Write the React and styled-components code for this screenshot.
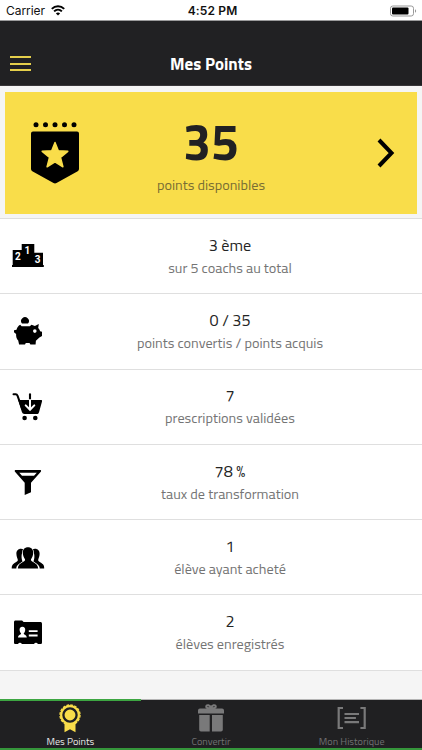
import React from 'react';
import styled, { createGlobalStyle } from 'styled-components';

const Global = createGlobalStyle`
  * { box-sizing: border-box; }
  body { margin: 0; background: #f5f5f5; font-family: "Titillium Web", "Noto Sans", sans-serif; }
`;
const Screen = styled.main`
  width: 422px; height: 750px; display: flex; flex-direction: column;
  overflow: hidden; background: #f5f5f5;
`;
const StatusBar = styled.div`
  height: 21px; flex: none; background: #fff; border-bottom: 1px solid #9b9b9c;
  display: grid; grid-template-columns: 1fr auto 1fr; align-items: center;
  padding: 1px 5px 0 6px; font-family: Inter, sans-serif; font-size: 12px; color: #111;
`;
const Carrier = styled.div`display: flex; align-items: center; gap: 6px; letter-spacing: -.05px;`;
const Clock = styled.div`font-weight: 600; letter-spacing: .15px; padding-left: 2px;`;
const Battery = styled.svg`justify-self: end; width: 28px; height: 12px;`;
const Header = styled.header`
  height: 65px; flex: none; background: #212123; border-bottom: 1px solid #39373a;
  display: grid; grid-template-columns: 40px 1fr 40px; align-items: end; padding-bottom: 8px;
`;
const MenuButton = styled.button`
  border: 0; background: none; padding: 0 0 6px 10px; height: 21px;
  display: flex; flex-direction: column; justify-content: space-between;
`;
const MenuBar = styled.span`width: 21px; height: 2px; background: #e5cf4b;`;
const Title = styled.h1`
  margin: 0; color: #fff; font-size: 17px; line-height: 26px; text-align: center;
  font-weight: 700;
`;
const Hero = styled.section`
  margin: 6px 5px 4px; height: 122px; flex: none; background: #f9dd4a;
  display: grid; grid-template-columns: 100px 1fr 60px; align-items: center;
`;
const HeroText = styled.div`
  display: flex; flex-direction: column; align-items: center; width: 212px; height: 100%;
`;
const Score = styled.strong`
  font-size: 50px; line-height: 52px; font-weight: 700; color: #212123; margin-top: 23px;
`;
const Label = styled.span`
  font-size: 14.25px; line-height: 22px; color: ${p => (p.$hero ? '#786d34' : '#747474')};
  margin-top: ${p => (p.$hero ? 7 : 1)}px; white-space: nowrap;
`;
const List = styled.ul`
  margin: 0; padding: 0; list-style: none; flex: none; background: #fff; border-top: 1px solid #dedede;
`;
const Row = styled.li`
  height: 75.3px; border-bottom: 1px solid #dfdfdf;
  display: grid; grid-template-columns: 46px 1fr; align-items: center; padding: 0 18px 0 10px;
`;
const RowIcon = styled.svg`width: 36px; height: 36px; fill: #000;`;
const RowText = styled.div`
  display: flex; flex-direction: column; align-items: center;
`;
const Value = styled.span`font-size: 16.2px; line-height: 22px; color: #242424;`;
const Tabs = styled.nav`
  margin-top: auto; height: 51px; flex: none; display: grid; grid-template-columns: 1fr 1fr 1fr;
  background: #202022; border-bottom: 2px solid #35963b;
`;
const Tab = styled.a`
  display: flex; flex-direction: column; align-items: center;
  border-top: ${p => (p.$active ? '2px solid #3da642' : '1px solid #b5b5b5')};
  padding-top: ${p => (p.$active ? 1 : 2)}px;
  color: ${p => (p.$active ? '#e8e8e8' : '#717173')};
`;
const TabIcon = styled.svg`width: 32px; height: 32px; flex: none; overflow: visible;`;
const TabLabel = styled.span`
  font-size: 10.15px; line-height: 14px; margin-top: 1px; white-space: nowrap;
`;

const Wifi = () => (
  <svg width="14" height="11" viewBox="0 0 14 11" fill="none" stroke="#000" strokeWidth="2">
    <path d="M.8 3.9C4.3.5 9.7.5 13.2 3.9M3.1 6.4c2.2-2.1 5.6-2.1 7.8 0" />
    <path d="M7 10.5 4.9 8.4c1.2-1.1 3-1.1 4.2 0z" fill="#000" stroke="none" />
  </svg>
);

const Podium = () => (
  <RowIcon viewBox="0 0 36 36">
    <path d="M2.7 12h9V6h12.6v8.700H33V27h.8v2H2v-2h.7z" />
    <g fill="#fff" fontFamily="Roboto, sans-serif" fontWeight="700" fontSize="10" textAnchor="middle">
      <text x="7.9" y="21.7">2</text><text x="17.4" y="16.2">1</text><text x="27.5" y="25">3</text>
    </g>
  </RowIcon>
);
const Piggy = () => (
  <RowIcon viewBox="0 0 36 36">
    <path d="M12 10.600a3.900 3.900 0 1 1 6 0z" />
    <path d="M10.200 11.800 11.600 13.200h8.200l1.700-1.500 3.400 1.200 3.900-1.900-.6 4c1 1.100 1.500 2 1.900 3.200l1.900.6v4.300l-2.600 1.500-3.500 3.200-.3 3.800h-5.200l-.9-1.700h-3.700l-.8 1.700H9.100l-.9-4c-1.600-1.700-2.200-3.900-2.100-6.700L4 19.200v-2l2.500-.5c.7-2.400 1.900-4 3.700-4.900z" />
    <circle cx="24.800" cy="18.100" r="1.800" fill="#fff" />
  </RowIcon>
);
const Cart = () => (
  <RowIcon viewBox="0 0 36 36">
    <path d="M3.500 5.300h2.200c1 0 1.500.6 1.900 1.600l4.600 13" fill="none" stroke="#000" strokeWidth="2" strokeLinecap="round" />
    <path d="M8.200 11h22.600c1 0 1.500.5 1.200 1.400l-3 10.800c-.4 1.300-1 1.800-2.300 1.800H14.500c-1.400 0-2.100-.6-2.600-1.900z" />
    <path d="M20 5.400V11" stroke="#000" strokeWidth="2.100" strokeLinecap="round" />
    <path d="M20 11v9.600m-4.300-4.200 4.300 4.400 4.300-4.400" fill="none" stroke="#fff" strokeWidth="2" strokeLinecap="round" />
    <circle cx="14.600" cy="29" r="2.300" /><circle cx="25.300" cy="29" r="2.300" />
  </RowIcon>
);
const Funnel = () => (
  <RowIcon viewBox="0 0 36 36">
    <path fillRule="evenodd" d="M5.300 6h25.200c.7 0 .8 1.200.3 1.800L21 18.700v9.600L14.700 31V18.700L5 7.800C4.500 7.200 4.700 6 5.300 6zM9.300 8.700 12 11.800h12l2.800-3.100z" />
  </RowIcon>
);
const People = () => (
  <RowIcon viewBox="0 0 36 36">
    <path d="M14 10.500C9.500 8.500 6.200 11 6.400 15c.1 2.500 1 4 1.400 5.700.4 1.800-3 2.700-4.800 4.600-1 1.100-1.300 2.500-1.300 4.100h4.600c0-4.200 4.500-5.300 6.500-6.500-1.600-2.900-2-8.500 1.200-12.400zM22 10.500c4.500-2 7.800.5 7.600 4.500-.1 2.500-1 4-1.400 5.700-.4 1.800 3 2.700 4.800 4.600 1 1.100 1.200 2.500 1.200 4.100h-4.500c0-4.200-4.500-5.300-6.500-6.500 1.600-2.900 2-8.500-1.200-12.400z" />
    <path d="M18 8.200c-3.200 0-5.300 2.100-5.200 5.500 0 2.600 1.200 5.200 2.200 6.600 1.100 3.100-6.500 2.500-7.200 9.100h20.400c-.7-6.600-8.300-6-7.200-9.100 1-1.400 2.200-4 2.200-6.600.1-3.400-2-5.500-5.200-5.500z" stroke="#fff" strokeWidth="1.300" paintOrder="stroke" />
  </RowIcon>
);
const IdFolder = () => (
  <RowIcon viewBox="0 0 36 36">
    <path d="M5.600 5.400h6.500l1.500 1.700h16.600c1.200 0 1.800.6 1.800 1.800v18.600c0 1-.6 1.600-1.600 1.600h-2.600a1.900 1.900 0 0 0-3.700 0H11.800a1.900 1.900 0 0 0-3.700 0H5.600c-1 0-1.600-.6-1.600-1.600V7c0-1 .6-1.600 1.600-1.600z" />
    <g fill="#fff">
      <path d="M12.400 11.700c-2 0-3 1.400-2.800 3.200.1 1.500.7 2.500 1.400 3.400.5 1.600-2.800 1.200-3 4.200h8.800c-.2-3-3.500-2.600-3-4.200.7-.9 1.300-1.900 1.400-3.400.2-1.800-.8-3.200-2.800-3.200z" />
      <path d="M18.800 15.200h8.800V17h-8.800zM18.800 19.600h8.800v1.800h-8.800z" />
    </g>
  </RowIcon>
);

const rows = [
  { icon: Podium, value: '3 ème', label: 'sur 5 coachs au total' },
  { icon: Piggy, value: '0 / 35', label: 'points convertis / points acquis' },
  { icon: Cart, value: '7', label: 'prescriptions validées' },
  { icon: Funnel, value: '78 %', label: 'taux de transformation' },
  { icon: People, value: '1', label: 'élève ayant acheté' },
  { icon: IdFolder, value: '2', label: 'élèves enregistrés' },
];

const ShieldBadge = styled.svg`width: 48px; height: 62px; margin-left: 26px;`;
const Chevron = styled.svg`width: 18px; height: 30px; margin-left: 20px;`;

export default function App() {
  return (
    <Screen>
      <Global />
      <StatusBar>
        <Carrier>Carrier <Wifi /></Carrier>
        <Clock>4:52 PM</Clock>
        <Battery viewBox="0 0 28 12">
          <rect x="1.500" y="1" width="23" height="10" rx="2.300" fill="#fff" stroke="#999" />
          <rect x="3" y="2.500" width="16.500" height="7" rx="1" />
          <path d="M26 4.300c1.500.4 1.500 3 0 3.400z" fill="#999" />
        </Battery>
      </StatusBar>
      <Header>
        <MenuButton aria-label="Menu"><MenuBar /><MenuBar /><MenuBar /></MenuButton>
        <Title>Mes Points</Title>
      </Header>
      <Hero>
        <ShieldBadge viewBox="0 0 48 62">
          {[5, 14.5, 24, 33.5, 43].map(x => <circle key={x} cx={x} cy="2.700" r="2.500" />)}
          <path d="M2 9.500h44q2 0 2 2V47q0 1.500-1.300 2.200L25.500 61q-1.500.8-3 0L1.300 49.200Q0 48.500 0 47V11.500q0-2 2-2z" />
          <path d="m24 20.500 3.300 8.200 9.500.6-7.300 6.100 2.400 9.400-7.900-5-7.900 5 2.400-9.400-7.300-6.100 9.500-.6z" fill="#f9dd4a" stroke="#f9dd4a" strokeWidth="1.500" strokeLinejoin="round" />
        </ShieldBadge>
        <HeroText>
          <Score>35</Score>
          <Label $hero>points disponibles</Label>
        </HeroText>
        <Chevron viewBox="0 0 18 30" fill="none" stroke="#000" strokeWidth="4">
          <path d="M2 2 14.500 15 2 28" />
        </Chevron>
      </Hero>
      <List>
        {rows.map(({ icon: Icon, value, label }) => (
          <Row key={label}>
            <Icon />
            <RowText>
              <Value>{value}</Value>
              <Label>{label}</Label>
            </RowText>
          </Row>
        ))}
      </List>
      <Tabs>
        <Tab $active>
          <TabIcon viewBox="0 0 32 32" fill="#f9dd4a">
            <path d="M10.500 20h11v10.200l-5.500-3-5.500 3z" />
            <circle cx="16" cy="13" r="10" stroke="#f9dd4a" strokeWidth="1.400" strokeDasharray="2.700 1.230" />
            <circle cx="16" cy="13" r="6.600" fill="none" stroke="#202022" strokeWidth="2.300" />
          </TabIcon>
          <TabLabel>Mes Points</TabLabel>
        </Tab>
        <Tab>
          <TabIcon viewBox="0 0 32 32" fill="#79797a">
            <path d="M5 6.500h22q2 0 2 2v3H3v-3q0-2 2-2zM4.200 13h10.500v16.500H6q-1.800 0-1.800-1.800zM17 13h10.800v14.700q0 1.800-1.800 1.800h-9z" />
            <path d="M16 6.500c-.7-3.700-4.500-4.300-4.800-1.800-.1 1.100 1.500 1.800 4.800 1.800zm0 0c.7-3.700 4.500-4.300 4.800-1.800.1 1.100-1.500 1.800-4.800 1.800z" fill="none" stroke="#79797a" strokeWidth="2" />
          </TabIcon>
          <TabLabel>Convertir</TabLabel>
        </Tab>
        <Tab>
          <TabIcon viewBox="0.3 0 32 32" fill="none" stroke="#79797a" strokeWidth="2.200">
            <path d="M7.300 6H3v20h4.300M24.700 6H29v20h-4.300M8.800 12h14.500M8.800 16h11.400M8.800 20.200h14.500" />
          </TabIcon>
          <TabLabel>Mon Historique</TabLabel>
        </Tab>
      </Tabs>
    </Screen>
  );
}
